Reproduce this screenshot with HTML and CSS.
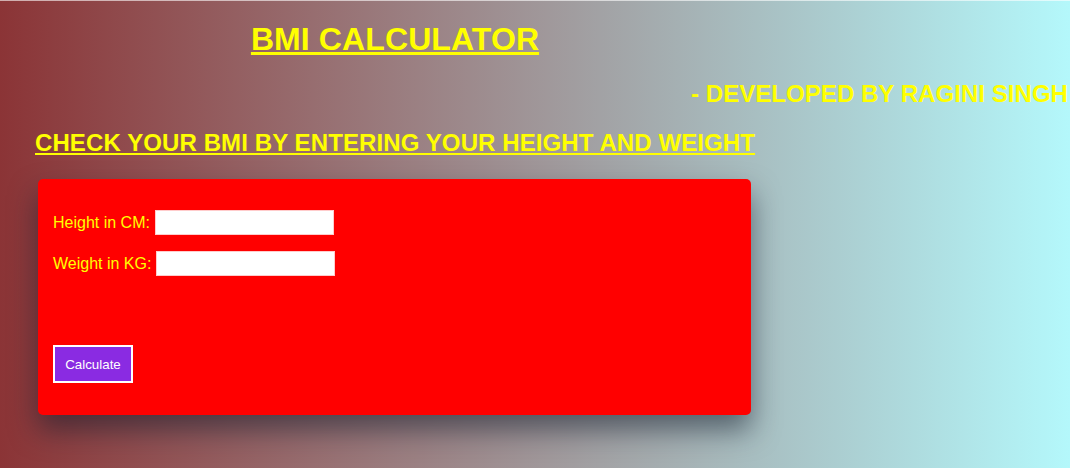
FILE: index.html
```html
<!DOCTYPE html>
<html lang="en">
<head>
<meta charset="utf-8">
<title>BMI Calculator</title>
<link rel="stylesheet" href="styles.css">
</head>
<body>
  <header class="header">
    <h1 class="title">BMI CALCULATOR</h1>
    <p class="credit">- DEVELOPED BY RAGINI SINGH</p>
  </header>
  <main class="main">
    <h3 class="subtitle">CHECK YOUR BMI BY ENTERING YOUR HEIGHT AND WEIGHT</h3>
    <form class="card">
      <div class="row">
        <label class="label" for="height">Height in CM:</label>
        <input class="field" id="height" type="text">
      </div>
      <div class="row">
        <label class="label" for="weight">Weight in KG:</label>
        <input class="field" id="weight" type="text">
      </div>
      <button class="btn" type="button">Calculate</button>
    </form>
  </main>
</body>
</html>
```
FILE: styles.css
```css
html, body {
  margin: 0;
  padding: 0;
}
body {
  width: 1070px;
  height: 468px;
  overflow: hidden;
  font-family: "Liberation Sans", Arial, sans-serif;
  background: linear-gradient(to right, #8b3436, #b4f8fb);
  border-top: 1px solid rgba(255,255,255,0.6);
  box-sizing: border-box;
}
.header {
  padding-top: 20px;
}
.title {
  margin: 0;
  width: 790px;
  text-align: center;
  font-size: 32px;
  line-height: 37px;
  font-weight: bold;
  letter-spacing: 0.1px;
  color: #ffff00;
  text-decoration: underline;
}
.credit {
  margin: 22px 0 0 0;
  text-align: right;
  padding-right: 2px;
  font-size: 24px;
  line-height: 28px;
  font-weight: bold;
  letter-spacing: 0.05px;
  color: #ffff00;
  white-space: nowrap;
}
.main {
  padding-left: 35px;
}
.subtitle {
  margin: 21px 0 0 0;
  font-size: 24px;
  line-height: 28px;
  font-weight: bold;
  letter-spacing: 0.1px;
  color: #ffff00;
  text-decoration: underline;
}
.card {
  margin: 22px 0 0 3px;
  width: 713px;
  box-sizing: border-box;
  padding: 31px 15px 32px 15px;
  background: #ff0000;
  border-radius: 5px;
  box-shadow: 0 15px 28px rgba(20, 30, 45, 0.55);
  display: flex;
  flex-direction: column;
  align-items: flex-start;
}
.row {
  display: flex;
  align-items: center;
  gap: 5px;
  height: 25px;
}
.row + .row {
  margin-top: 16px;
}
.label {
  font-size: 16px;
  color: #ffff00;
}
.field {
  width: 179px;
  height: 25px;
  box-sizing: border-box;
  margin: 0;
  border: 1px solid #ffcccc;
  background: #ffffff;
  padding: 2px 4px;
}
.btn {
  margin-top: 69px;
  width: 80px;
  height: 38px;
  box-sizing: border-box;
  background: #8a2be2;
  border: 2px solid #ffffff;
  color: #ffffff;
  font-family: "Liberation Sans", Arial, sans-serif;
  font-size: 13.33px;
  padding: 0;
}
```
